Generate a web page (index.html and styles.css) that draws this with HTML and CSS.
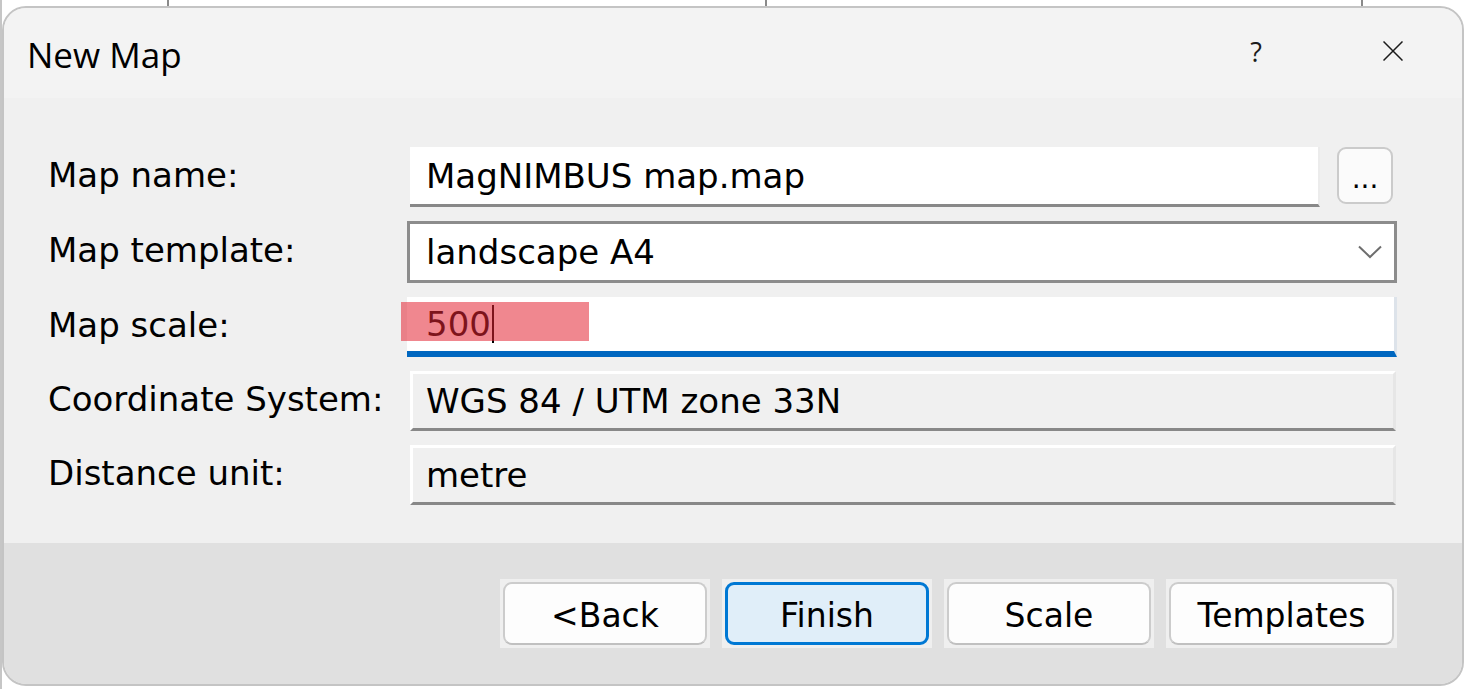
FILE: index.html
```html
<!DOCTYPE html>
<html lang="en">
<head>
<meta charset="utf-8">
<title>New Map</title>
<link rel="stylesheet" href="styles.css">
</head>
<body>
<div class="dialog">
  <header class="titlebar">
    <h1 class="title">New Map</h1>
    <div class="controls">
      <span class="help">?</span>
      <svg class="close" width="20" height="20" viewBox="0 0 20 20" aria-label="Close">
        <path d="M0.5 0.5 L19.5 19.5 M19.5 0.5 L0.5 19.5" stroke="#1b1b1b" stroke-width="1.5" fill="none"/>
      </svg>
    </div>
  </header>

  <main class="content">
    <div class="form">
      <label class="label">Map name:</label>
      <div class="row-name">
        <div class="field field-text">MagNIMBUS map.map</div>
        <button class="browse">...</button>
      </div>

      <label class="label">Map template:</label>
      <div class="field field-combo">
        <span>landscape A4</span>
        <svg class="chevron" width="24" height="14" viewBox="0 0 24 14">
          <path d="M1 1.5 L12 12 L23 1.5" stroke="#6e6e6e" stroke-width="2" fill="none"/>
        </svg>
      </div>

      <label class="label">Map scale:</label>
      <div class="field field-active">
        <span class="value">500</span><span class="caret"></span>
        <span class="highlight"></span>
      </div>

      <label class="label">Coordinate System:</label>
      <div class="field field-readonly">WGS 84 / UTM zone 33N</div>

      <label class="label">Distance unit:</label>
      <div class="field field-readonly">metre</div>
    </div>
  </main>

  <footer class="footer">
    <div class="frame"><button class="btn">&lt;Back</button></div>
    <div class="frame"><button class="btn btn-default">Finish</button></div>
    <div class="frame"><button class="btn">Scale</button></div>
    <div class="frame"><button class="btn btn-wide">Templates</button></div>
  </footer>
</div>
</body>
</html>
```

FILE: styles.css
```css
html, body {
  margin: 0;
  padding: 0;
}

body {
  width: 1466px;
  height: 689px;
  overflow: hidden;
  background-color: #ffffff;
  background-image:
    linear-gradient(#8a8a8a, #8a8a8a),
    linear-gradient(#8a8a8a, #8a8a8a),
    linear-gradient(#8a8a8a, #8a8a8a),
    linear-gradient(#c6c6c6, #c6c6c6);
  background-size: 2px 8px, 2px 8px, 2px 8px, 2px 100%;
  background-position: 167px 0, 765px 0, 1361px 0, 0 0;
  background-repeat: no-repeat;
  font-family: "DejaVu Sans", Verdana, sans-serif;
  color: #000;
}

.dialog {
  box-sizing: border-box;
  margin: 6px 0 0 2px;
  width: 1462px;
  height: 680px;
  border: 2px solid #c4c4c4;
  border-radius: 24px;
  overflow: hidden;
  display: flex;
  flex-direction: column;
  background: #f0f0f0;
}

/* Title bar */
.titlebar {
  height: 90px;
  flex: none;
  background: #f3f3f3;
  display: flex;
  align-items: center;
  justify-content: space-between;
}

.title {
  margin: 0 0 0 23px;
  font-family: "Open Sans", "Segoe UI", sans-serif;
  font-weight: 400;
  font-size: 35px;
  line-height: 1;
  color: #000;
  position: relative;
  top: 1px;
}

.controls {
  display: flex;
  align-items: center;
  gap: 117px;
  margin-right: 59px;
}

.help {
  width: 20px;
  text-align: center;
  font-family: "Open Sans", "Segoe UI", sans-serif;
  font-size: 27px;
  line-height: 1;
  color: #1b1b1b;
  position: relative;
  top: -2px;
}

.close {
  display: block;
  position: relative;
  top: -2px;
}

/* Content */
.content {
  flex: 1;
  background: #f0f0f0;
  padding: 49px 65px 0 44px;
}

.form {
  display: grid;
  grid-template-columns: 359px 1fr;
  grid-template-rows: 60px 62px 60px 60px 60px;
  row-gap: 14px;
}

.label {
  align-self: center;
  font-size: 34px;
  line-height: 1;
  white-space: nowrap;
  position: relative;
  top: -2px;
}

.field {
  box-sizing: border-box;
  display: flex;
  align-items: center;
  font-size: 34px;
  line-height: 1;
  white-space: nowrap;
}

.row-name {
  display: flex;
  align-items: flex-start;
  gap: 17px;
  padding: 0 4px 0 3px;
}

.field-text {
  flex: 1;
  align-self: stretch;
  background: #ffffff;
  border-bottom: 3px solid #888888;
  border-right: 2px solid #ececec;
  padding-left: 16px;
}

.browse {
  box-sizing: border-box;
  width: 56px;
  height: 57px;
  border: 2px solid #cbcbcb;
  border-radius: 9px;
  background: #fbfbfb;
  font-family: "DejaVu Sans", Verdana, sans-serif;
  font-size: 28px;
  line-height: 1;
  padding: 6px 0 0 0;
  color: #000;
}

.field-combo {
  background: #ffffff;
  border: 3px solid #8c8c8c;
  padding: 0 12px 0 16px;
  justify-content: space-between;
}

.chevron {
  display: block;
}

.field-active {
  position: relative;
  background: #ffffff;
  border-bottom: 6px solid #0067c0;
  border-right: 3px solid #dde3ea;
  padding-left: 19px;
}

.caret {
  display: inline-block;
  width: 2px;
  height: 38px;
  background: #000;
  margin-left: 1px;
}

.highlight {
  position: absolute;
  left: -6px;
  top: 5px;
  width: 188px;
  height: 39px;
  background: rgba(228, 37, 51, 0.55);
}

.field-readonly {
  background: #f0f0f0;
  border-top: 3px solid #ffffff;
  border-left: 3px solid #ffffff;
  border-right: 3px solid #e6e6e6;
  border-bottom: 3px solid #888888;
  margin: 0 1px 0 3px;
  padding-left: 13px;
}

/* Footer */
.footer {
  flex: none;
  height: 141px;
  box-sizing: border-box;
  background: #e0e0e0;
  display: flex;
  justify-content: flex-end;
  align-items: flex-start;
  gap: 12px;
  padding: 36px 65px 0 0;
}

.frame {
  background: #efefef;
  padding: 3px;
}

.btn {
  box-sizing: border-box;
  display: block;
  width: 204px;
  height: 63px;
  border: 2px solid #cccccc;
  border-bottom-color: #c0c0c0;
  border-radius: 9px;
  background: #fdfdfd;
  font-family: "DejaVu Sans", Verdana, sans-serif;
  font-size: 33px;
  line-height: 1;
  color: #000;
  padding: 4px 0 0 0;
}

.btn-default {
  border: 3px solid #0078d4;
  background: #e0eef9;
}

.btn-wide {
  width: 225px;
}
```
